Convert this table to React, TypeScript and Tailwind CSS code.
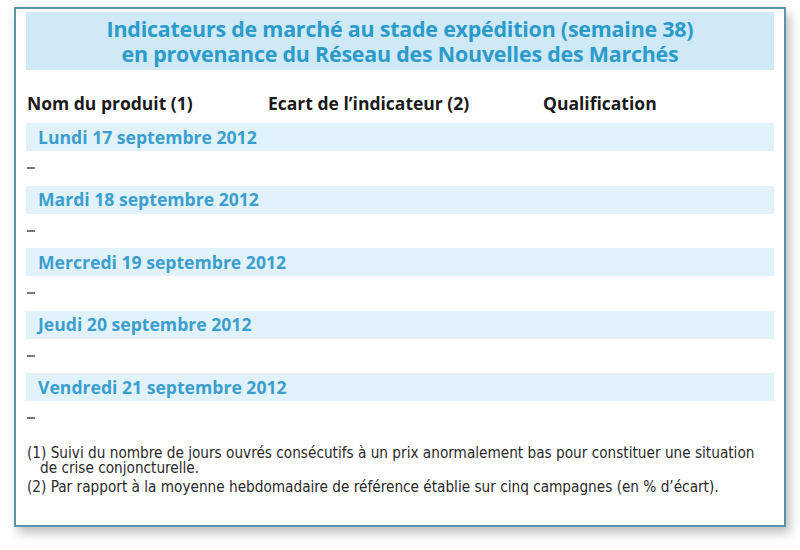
import React from 'react';

const days = [
  'Lundi 17 septembre 2012',
  'Mardi 18 septembre 2012',
  'Mercredi 19 septembre 2012',
  'Jeudi 20 septembre 2012',
  'Vendredi 21 septembre 2012',
];

const App: React.FC = () => {
  return (
    <div className="w-[800px] h-[550px] bg-white pt-[7px] pl-[14px]" style={{ fontFamily: '"Open Sans", "DejaVu Sans", sans-serif' }}>
      <div className="w-[772px] h-[520px] border-2 border-[#5b93aa] bg-white px-[10px] pt-[3px] shadow-[4px_6px_10px_rgba(0,0,0,0.25)]">
        {/* Title */}
        <div className="h-[58px] bg-[#cfe9f6] flex flex-col items-center justify-center text-[#2b9bcc] font-bold text-[21.4px] leading-[25px] tracking-[-0.2px]">
          <div>Indicateurs de marché au stade expédition (semaine 38)</div>
          <div>en provenance du Réseau des Nouvelles des Marchés</div>
        </div>

        {/* Column headers */}
        <div className="flex items-start h-[53px] pt-[22px] text-[17.5px] leading-[22px] font-bold text-[#1a1a1a] pl-[1px]">
          <div className="w-[241px]">Nom du produit (1)</div>
          <div className="w-[275px]">Ecart de l’indicateur (2)</div>
          <div>Qualification</div>
        </div>

        {/* Days */}
        <div className="flex flex-col">
          {days.map((d) => (
            <div key={d} className="flex flex-col">
              <div className="h-[28px] bg-[#e2f2fa] flex items-center pl-[12px] text-[#3a9fcf] font-bold text-[17.6px]">
                {d}
              </div>
              <div className="h-[34.5px] flex items-center pl-[1px]">
                <div className="w-[8px] h-[2px] bg-[#777]" />
              </div>
            </div>
          ))}
        </div>

        {/* Footnotes */}
        <div className="mt-[10px] pr-[12px] text-[15.2px] leading-[15px] text-[#2a2a2a] pl-[1px]" style={{ fontFamily: '"Liberation Sans Narrow", "DejaVu Sans Condensed", "Liberation Sans", sans-serif' }}>
          <div className="pl-[13px] -indent-[13px]">
            (1) Suivi du nombre de jours ouvrés consécutifs à un prix anormalement bas pour constituer une situation de crise conjoncturelle.
          </div>
          <div className="mt-[4px]">
            (2) Par rapport à la moyenne hebdomadaire de référence établie sur cinq campagnes (en % d’écart).
          </div>
        </div>
      </div>
    </div>
  );
};

export default App;
